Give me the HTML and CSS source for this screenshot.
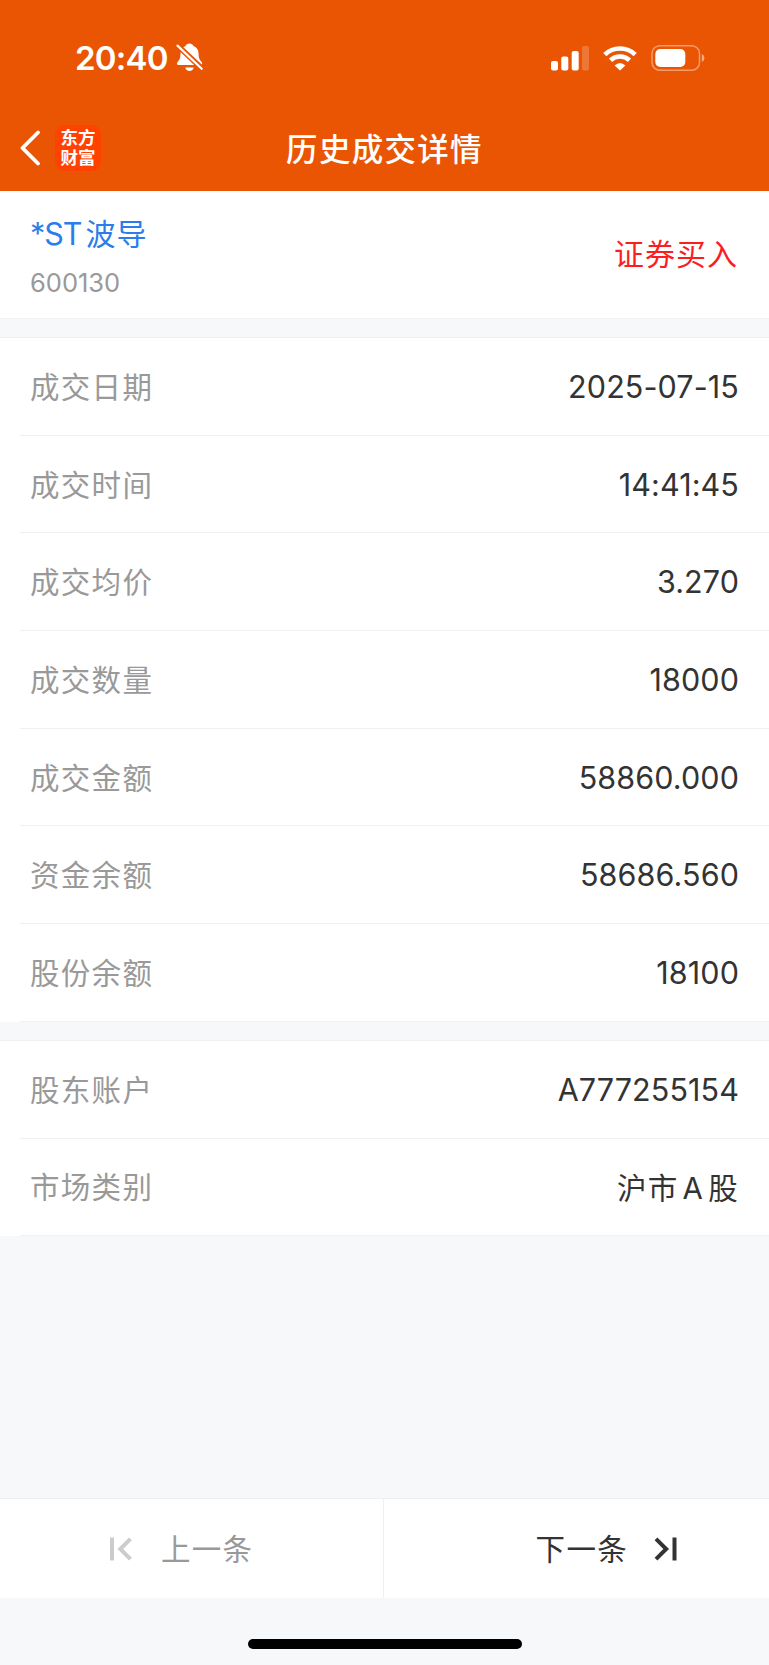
FILE: index.html
```
<!DOCTYPE html>
<html lang="zh-CN">
<head>
  <meta charset="UTF-8">
  <title>历史成交详情</title>
  <link rel="stylesheet" href="styles.css">
</head>
<body>

  <header class="header">
    <!-- Status bar -->
    <div class="status-bar">
      <span class="time">20:40</span>
      <svg class="bell" width="27" height="29" viewBox="0 0 27 29">
        <path fill="#fff" d="M13.500.5c-1.900 0-3.400 1-4 2.600C6.100 4.300 4.600 7.200 4.500 11c-.1 4-.8 5.500-2.800 7.800-1.200 1.500-1 3.200.9 3.200h21.800c2 0 2.200-1.700 1-3.200-2-2.300-2.700-3.800-2.800-7.800-.1-3.800-1.600-6.700-5.100-7.900C16.900 1.500 15.400.5 13.500.5z" />
        <path fill="#fff" d="M9.300 24.500h8.400c-.4 2.200-2 3.500-4.200 3.500s-3.800-1.300-4.200-3.500z" />
        <path stroke="#ea5504" stroke-width="5.500" d="M0 1L28 27.600" />
        <path stroke="#fff" stroke-width="2.200" stroke-linecap="round" d="M1.500 2.600L25.700 25.800" />
      </svg>
      <div class="status-icons">
        <svg class="signal" width="39" height="26" viewBox="0 0 39 26">
          <rect x="0" y="16" width="7" height="9.500" rx="2" />
          <rect x="10.300" y="11.500" width="7" height="14" rx="2" />
          <rect x="20.700" y="6" width="7" height="19.500" rx="2" />
          <rect x="31" y="1" width="7" height="24.500" rx="2" opacity=".2" />
        </svg>
        <svg class="wifi" width="34" height="26" viewBox="0 0 34 26">
          <g fill="none" stroke="#fff" stroke-width="4.600">
            <path d="M1.800 9.600A22 22 0 0 1 32.200 9.600" />
            <path d="M7.500 15.200A14 14 0 0 1 26.500 15.200" />
          </g>
          <path fill="#fff" d="M11.600 20.400Q17 15.400 22.400 20.400L17 25.600z" />
        </svg>
        <svg class="battery" width="54" height="28" viewBox="0 0 54 28">
          <rect x="1" y="1.700" width="47.500" height="24.600" rx="7.800" fill="none" stroke="#fff" stroke-width="1.500" opacity=".42" />
          <rect x="4.300" y="5" width="30" height="18" rx="5" fill="#fff" />
          <path d="M50.800 10v8c1.600-.7 2.600-2.200 2.600-4s-1-3.300-2.600-4z" fill="#fff" opacity=".5" />
        </svg>
      </div>
    </div>

    <!-- Title bar -->
    <div class="nav-bar">
      <div class="nav-left">
        <svg width="22" height="36" viewBox="0 0 22 36">
          <path fill="none" stroke="#fff" stroke-width="3.800" stroke-linecap="round" stroke-linejoin="round" d="M19 2.500L3.500 18L19 33.500" />
        </svg>
        <div class="logo">东方<br>财富</div>
      </div>
      <h1>历史成交详情</h1>
      <div class="nav-right"></div>
    </div>
  </header>

  <section class="stock">
    <div>
      <div class="stock-name">*ST<span class="cn">波导</span></div>
      <div class="stock-code">600130</div>
    </div>
    <div class="side">证券买入</div>
  </section>

  <section class="list">
    <div class="row"><span class="label">成交日期</span><span class="value">2025-07-15</span></div>
    <div class="row"><span class="label">成交时间</span><span class="value">14:41:45</span></div>
    <div class="row"><span class="label">成交均价</span><span class="value">3.270</span></div>
    <div class="row"><span class="label">成交数量</span><span class="value">18000</span></div>
    <div class="row"><span class="label">成交金额</span><span class="value">58860.000</span></div>
    <div class="row"><span class="label">资金余额</span><span class="value">58686.560</span></div>
    <div class="row"><span class="label">股份余额</span><span class="value">18100</span></div>
  </section>

  <section class="list">
    <div class="row"><span class="label">股东账户</span><span class="value">A777255154</span></div>
    <div class="row"><span class="label">市场类别</span><span class="value market">沪市<span class="latin">A</span>股</span></div>
  </section>

  <footer class="footer">
    <div class="pager">
      <div class="prev">
        <svg width="23" height="24" viewBox="0 0 23 24">
          <path fill="none" stroke="#ccc" stroke-width="4" d="M2 .5V23.500M20.500 1.800L10.300 12L20.500 22.200" />
        </svg>
        <span>上一条</span>
      </div>
      <div class="next">
        <span>下一条</span>
        <svg width="23" height="24" viewBox="0 0 23 24">
          <path fill="none" stroke="#333" stroke-width="4" d="M20.500 .5V23.500M2 1.800L12.200 12L2 22.200" />
        </svg>
      </div>
    </div>
    <div class="home-indicator"></div>
  </footer>

</body>
</html>
```

FILE: styles.css
```
* {
  box-sizing: border-box;
}

body {
  margin: 0;
  height: 1665px;
  display: flex;
  flex-direction: column;
  background: #f6f8fa;
  font-family: Inter, "Noto Sans CJK SC", sans-serif;
  color: #333;
}

/* header */
.header {
  height: 191px;
  background: #ea5504;
  color: #fff;
}

.status-bar {
  height: 105px;
  padding: 10px 64px 0 75px;
  display: flex;
  align-items: center;
}

.time {
  font-size: 33px;
  font-weight: 600;
  line-height: 40px;
  letter-spacing: -0.8px;
}

.bell {
  margin-left: 8px;
}

.status-icons {
  margin-left: auto;
  display: flex;
  align-items: center;
}

.signal {
  fill: #fff;
}

.wifi {
  margin: 0 14px 0 13px;
}

.nav-bar {
  height: 86px;
  display: flex;
  align-items: center;
  justify-content: space-between;
}

.nav-left, .nav-right {
  width: 120px;
}

.nav-left {
  padding-left: 19px;
  display: flex;
  align-items: center;
}

.logo {
  width: 46px;
  height: 46px;
  margin-left: 14px;
  padding-top: 2px;
  border-radius: 9px;
  background: #ff4200;
  text-align: center;
  font-family: "Noto Sans CJK SC", sans-serif;
  font-size: 17.5px;
  font-weight: bold;
  line-height: 19.5px;
}

h1 {
  margin: 0;
  padding-bottom: 3px;
  font-family: "Noto Sans CJK SC", sans-serif;
  font-size: 31.5px;
  font-weight: 500;
  letter-spacing: 1.3px;
}

/* stock */
.stock {
  height: 128px;
  padding: 2px 31px 0 30px;
  background: #fff;
  border-bottom: 1px solid #f0f1f3;
  display: flex;
  align-items: center;
  justify-content: space-between;
}

.stock-name {
  font-size: 30.5px;
  line-height: 46px;
  letter-spacing: -1px;
  color: #2b7de9;
}

.stock-code {
  margin-top: 8px;
  font-size: 25.5px;
  line-height: 36px;
  color: #999;
}

.cn {
  margin-left: 4px;
  font-size: 30px;
  letter-spacing: 1px;
}

.side {
  padding-bottom: 8px;
  font-size: 30px;
  letter-spacing: 1px;
  color: #fa1e1e;
}

/* detail rows */
.list {
  margin-top: 18px;
  padding-left: 20px;
  background: #fff;
  border-top: 1px solid #eeeff1;
}

.row {
  height: 97.7px;
  padding: 0 30px 0 10px;
  border-bottom: 1px solid #f0f1f2;
  display: flex;
  align-items: center;
  justify-content: space-between;
}

.label {
  padding-bottom: 3px;
  font-size: 29.5px;
  letter-spacing: 1.3px;
  color: #999;
}

.value {
  font-size: 30.5px;
  font-weight: 380;
  letter-spacing: 0.1px;
}

.market {
  padding-bottom: 2px;
  font-size: 29.5px;
  letter-spacing: 1.3px;
}

.latin {
  margin: 0 4px;
}

/* footer */
.footer {
  margin-top: auto;
  height: 167px;
}

.pager {
  height: 100px;
  background: #fff;
  border-top: 1px solid #eeeff1;
  display: flex;
  font-size: 29.5px;
  letter-spacing: 1.3px;
}

.prev, .next {
  display: flex;
  align-items: center;
}

.prev span, .next span {
  padding-bottom: 4px;
}

.prev {
  width: 384px;
  padding-left: 110px;
  gap: 28px;
  color: #999;
  border-right: 1px solid #eeeff1;
}

.next {
  flex: 1;
  justify-content: flex-end;
  padding-right: 92px;
  gap: 26px;
}

.home-indicator {
  width: 274px;
  height: 10px;
  margin: 41px auto 0;
  border-radius: 5px;
  background: #000;
}
```
